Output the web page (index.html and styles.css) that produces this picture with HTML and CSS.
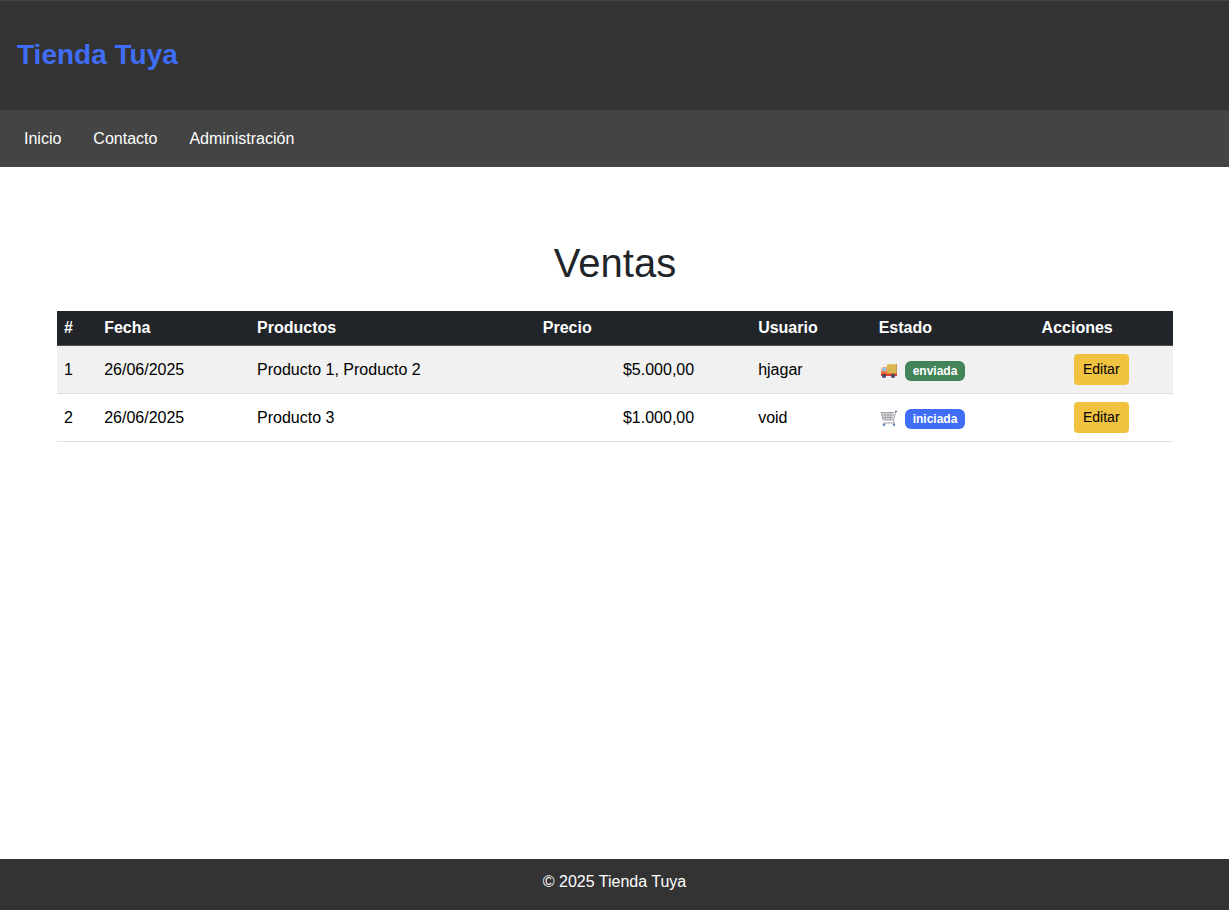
FILE: index.html
```html
<!DOCTYPE html>
<html lang="es">
<head>
<meta charset="utf-8">
<meta name="viewport" content="width=device-width, initial-scale=1">
<title>Tienda Tuya</title>
<link rel="stylesheet" href="styles.css">
</head>
<body>
<header class="header"><a class="brand" href="#">Tienda Tuya</a></header>
<nav class="nav">
  <a href="#">Inicio</a>
  <a href="#">Contacto</a>
  <a href="#">Administración</a>
</nav>
<main class="main">
  <h1 class="title">Ventas</h1>
  <table class="sales">
    <colgroup>
      <col class="c-id"><col class="c-date"><col class="c-products"><col class="c-price"><col class="c-user"><col class="c-status"><col class="c-actions">
    </colgroup>
    <thead>
      <tr><th>#</th><th>Fecha</th><th>Productos</th><th>Precio</th><th>Usuario</th><th>Estado</th><th>Acciones</th></tr>
    </thead>
    <tbody>
      <tr>
        <td>1</td><td>26/06/2025</td><td>Producto 1, Producto 2</td><td class="price">$5.000,00</td><td>hjagar</td>
        <td><div class="status">
          <svg class="icon" viewBox="0 0 20 20" aria-hidden="true">
            <path fill="#d9b650" d="M8 3h10v10H8z"/>
            <path fill="#e6c566" d="M8 3h9v1H8z"/>
            <path fill="#c2a04a" d="M17 3h1v10h-1z"/>
            <path fill="#f2a077" d="M4 6h4v5H2V9z"/>
            <path fill="#84c8f4" d="M4 7h3v3H3z"/>
            <path fill="#f07a3c" d="M2 10h6v3H2z"/>
            <path fill="#dd4a30" d="M2 12.500h16V15H2z"/>
            <circle cx="5" cy="15" r="2" fill="#33375a"/><circle cx="14" cy="15" r="2" fill="#33375a"/>
            <circle cx="5" cy="15" r=".8" fill="#7e819c"/><circle cx="14" cy="15" r=".8" fill="#7e819c"/>
          </svg>
          <span class="badge sent">enviada</span></div></td>
        <td class="actions"><button class="edit" type="button">Editar</button></td>
      </tr>
      <tr>
        <td>2</td><td>26/06/2025</td><td>Producto 3</td><td class="price">$1.000,00</td><td>void</td>
        <td><div class="status">
          <svg class="icon" viewBox="0 0 20 20" aria-hidden="true">
            <path fill="#e4e2e6" d="M2 3h13l-1 8H4z"/>
            <path fill="none" stroke="#a5a1a9" d="M2 3.500h13M3 6h12M3 8.500h11M4 11h10M2 3l2 8M5.500 3l1 8M9 3v8M12 3l-.5 8M17.500 2l-1 1-2 9 1 2H4"/>
            <path stroke="#5f79c8" stroke-width="1.500" d="M16 2.500h2"/>
            <circle cx="5" cy="15.800" r="1.200" fill="#5f79c8"/><circle cx="15" cy="15.800" r="1.200" fill="#5f79c8"/>
          </svg>
          <span class="badge started">iniciada</span></div></td>
        <td class="actions"><button class="edit" type="button">Editar</button></td>
      </tr>
    </tbody>
  </table>
</main>
<footer class="footer">© 2025 Tienda Tuya</footer>
</body>
</html>
```
FILE: styles.css
```css
* { box-sizing: border-box; }
body {
  margin: 0;
  min-height: 100vh;
  display: flex;
  flex-direction: column;
  font: 16px/24px "Liberation Sans", Arial, sans-serif;
  color: #212529;
  background: #fff;
}
.header {
  padding: 32px 17px 34px;
  background: #333;
  border-top: 1px solid #444;
}
.brand {
  display: block;
  font-size: 28px;
  line-height: 43px;
  font-weight: 700;
  color: #3f6df6;
  text-decoration: none;
}
.nav {
  display: flex;
  gap: 32px;
  padding: 17px 24px 16px;
  background: #444;
}
.nav a { color: #fff; text-decoration: none; }
.main { flex: 1; padding: 72px 56px 48px 57px; }
.title {
  margin: 0 0 24px;
  font-size: 40px;
  line-height: 48px;
  font-weight: 400;
  text-align: center;
}
.sales {
  width: 100%;
  table-layout: fixed;
  border-collapse: separate;
  border-spacing: 0;
  color: #000;
}
.c-id { width: 3.6%; }
.c-date { width: 13.7%; }
.c-products { width: 25.6%; }
.c-price { width: 19.3%; }
.c-user { width: 10.8%; }
.c-status { width: 14.6%; }
.c-actions { width: 12.4%; }
.sales th {
  padding: 5px 7px;
  text-align: left;
  color: #fff;
  background: #212529;
  border-bottom: 1px solid #4d5154;
}
.sales td {
  padding: 8px 7px;
  line-height: 31px;
  border-bottom: 1px solid #dee2e6;
}
.sales tbody tr:nth-child(odd) { background: #f1f1f1; }
.sales .price { text-align: right; padding-right: 57px; }
.sales .actions { text-align: center; padding-right: 12px; }
.status { display: flex; align-items: center; gap: 6px; padding-top: 2px; }
.icon { width: 20px; height: 20px; }
.badge {
  padding: 4px 8px;
  border-radius: 6px;
  font-size: 12px;
  line-height: 12px;
  font-weight: 700;
  color: #fff;
}
.sent { background: #43845a; }
.started { background: #3f6df6; }
.edit {
  display: block;
  margin: 0 auto;
  padding: 5px 9px;
  border: 0;
  border-radius: 4px;
  font: 14px/21px "Liberation Sans", Arial, sans-serif;
  color: #000;
  background: #f1c140;
}
.footer {
  padding: 11px 16px 16px;
  text-align: center;
  color: #fff;
  background: #333;
}
```
